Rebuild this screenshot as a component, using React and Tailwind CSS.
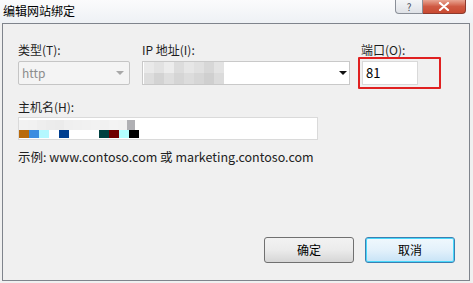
import React from 'react';

const font = { fontFamily: '"Noto Sans CJK SC", "Liberation Sans", sans-serif' };

const Blur = ({ cells }) => (
  <div className="flex">
    {cells.map((c, i) => (
      <div key={i} className="h-[11px] w-[10px]" style={{ background: c }} />
    ))}
  </div>
);

const App = () => {
  return (
    <div className="w-[473px] h-[283px] bg-[#f0f0f0] flex flex-col overflow-hidden text-[12px] text-[#1e1e1e]" style={font}>
      {/* title bar */}
      <div className="h-[23px] shrink-0 bg-gradient-to-b from-[#fbfbfc] to-[#eef1f5] flex items-start justify-between">
        <span className="pl-[3px] pt-[3px] text-[12px] leading-[16px] text-black">编辑网站绑定</span>
        <div className="flex mr-[7px]">
          <div className="w-[28px] h-[14px] border border-[#8a8f98] border-t-0 rounded-bl-[4px] bg-gradient-to-b from-[#f4f5f7] to-[#dfe2e7] flex items-center justify-center text-[10px] leading-none text-[#4a5060]">?</div>
          <div className="w-[43px] h-[14px] border border-[#8c3a2e] border-t-0 border-l-0 rounded-br-[4px] bg-gradient-to-b from-[#e8a593] via-[#cf5a43] to-[#c94a32] flex items-center justify-center">
            <svg width="12" height="9" viewBox="0 0 12 9">
              <path d="M2 1 L10 8 M10 1 L2 8" stroke="#fff" strokeWidth="2.2" strokeLinecap="round" />
            </svg>
          </div>
        </div>
      </div>

      {/* content panel */}
      <div className="ml-[2px] mr-[3px] h-[258px] border border-[#7f848c] bg-[#f0f0f0] flex flex-col pl-[15px]">
        <div className="flex gap-[12px] pt-[18px]">
          <div className="flex flex-col w-[112px]">
            <span className="leading-[16px] h-[16px] mb-[3px]">类型(T):</span>
            <div className="h-[24px] border border-[#c5c5c5] rounded-[2px] bg-[#f4f4f4] flex items-center justify-between px-[3px]">
              <span className="text-[#8d8d8d]">http</span>
              <svg width="8" height="4" viewBox="0 0 8 4" className="mr-[2px]"><path d="M0 0 L8 0 L4 4 Z" fill="#a8a8a8" /></svg>
            </div>
          </div>
          <div className="flex flex-col w-[208px]">
            <span className="leading-[16px] h-[16px] mb-[3px]">IP 地址(I):</span>
            <div className="h-[24px] border border-[#c9c9c9] bg-white flex items-center justify-between pl-[1px] pr-[2px]">
              <div className="flex flex-col">
                <Blur cells={['#e9e9e9', '#e2e2e2', '#ececec', '#dcdcdc', '#e6e6e6', '#e0e0e0', '#d7d7d7', '#e3e3e3']} />
                <Blur cells={['#dddddd', '#d3d3d3', '#dedede', '#d5d5d5', '#dcdcdc', '#d6d6d6', '#cfcfcf', '#dbdbdb']} />
              </div>
              <svg width="8" height="4" viewBox="0 0 8 4"><path d="M0 0 L8 0 L4 4 Z" fill="#111" /></svg>
            </div>
          </div>
          <div className="flex flex-col w-[56px] relative">
            <span className="leading-[16px] h-[16px] mb-[3px] -ml-[1px]">端口(O):</span>
            <div className="h-[24px] border border-[#d9d9d9] bg-white flex items-center pl-[3px] text-[13px] text-black">81</div>
            <div className="absolute left-[-4px] top-[15px] w-[83px] h-[32px] border-2 border-[#e02020] rounded-[1px]" />
          </div>
        </div>

        <div className="flex flex-col pt-[14px]">
          <span className="leading-[16px] h-[16px] mb-[2px]">主机名(H):</span>
          <div className="w-[300px] h-[23px] border border-[#dadada] bg-white flex flex-col justify-center">
            <div className="flex">
              {['#f2f2f2', '#f1f1f1', '#eeeeee', '#ececec', '#ebebeb', '#efefef', '#f0f0f0', '#f1f1f1', '#f2f2f2', '#f1f1f1', '#f3f3f3', '#f2f2f2'].map((c, i) => (
                <div key={i} className="h-[10px] w-[9px]" style={{ background: c }} />
              ))}
              <div className="h-[10px] w-[8px] bg-[#b0b0b4]" />
            </div>
            <div className="flex">
              {['#b86a0c', '#3a8de0', '#b4f8ff', '#fff', '#003e90', '#fff', '#fff', '#fff', '#004040', '#6e0000', '#b2ffff', '#000'].map((c, i) => (
                <div key={i} className="h-[8px] w-[10px]" style={{ background: c }} />
              ))}
            </div>
          </div>
        </div>

        <div className="pt-[9px] leading-[16px] text-[12.5px] text-[#222]">示例: www.contoso.com 或 marketing.contoso.com</div>

        <div className="flex-1" />

        <div className="flex justify-end gap-[11px] pr-[14px] pb-[17px]">
          <button className="w-[90px] h-[26px] border border-[#707070] rounded-[3px] bg-gradient-to-b from-[#f2f2f2] via-[#ebebeb] to-[#d6d6d6] text-[12px] text-black" style={font}>确定</button>
          <button className="w-[90px] h-[26px] border border-[#3c7fb1] rounded-[3px] bg-gradient-to-b from-[#f0f8fd] via-[#e3f1fb] to-[#c7e3f6] text-[12px] text-black shadow-[inset_0_0_0_1px_#48d8fb]" style={font}>取消</button>
        </div>
      </div>
    </div>
  );
};

export default App;
